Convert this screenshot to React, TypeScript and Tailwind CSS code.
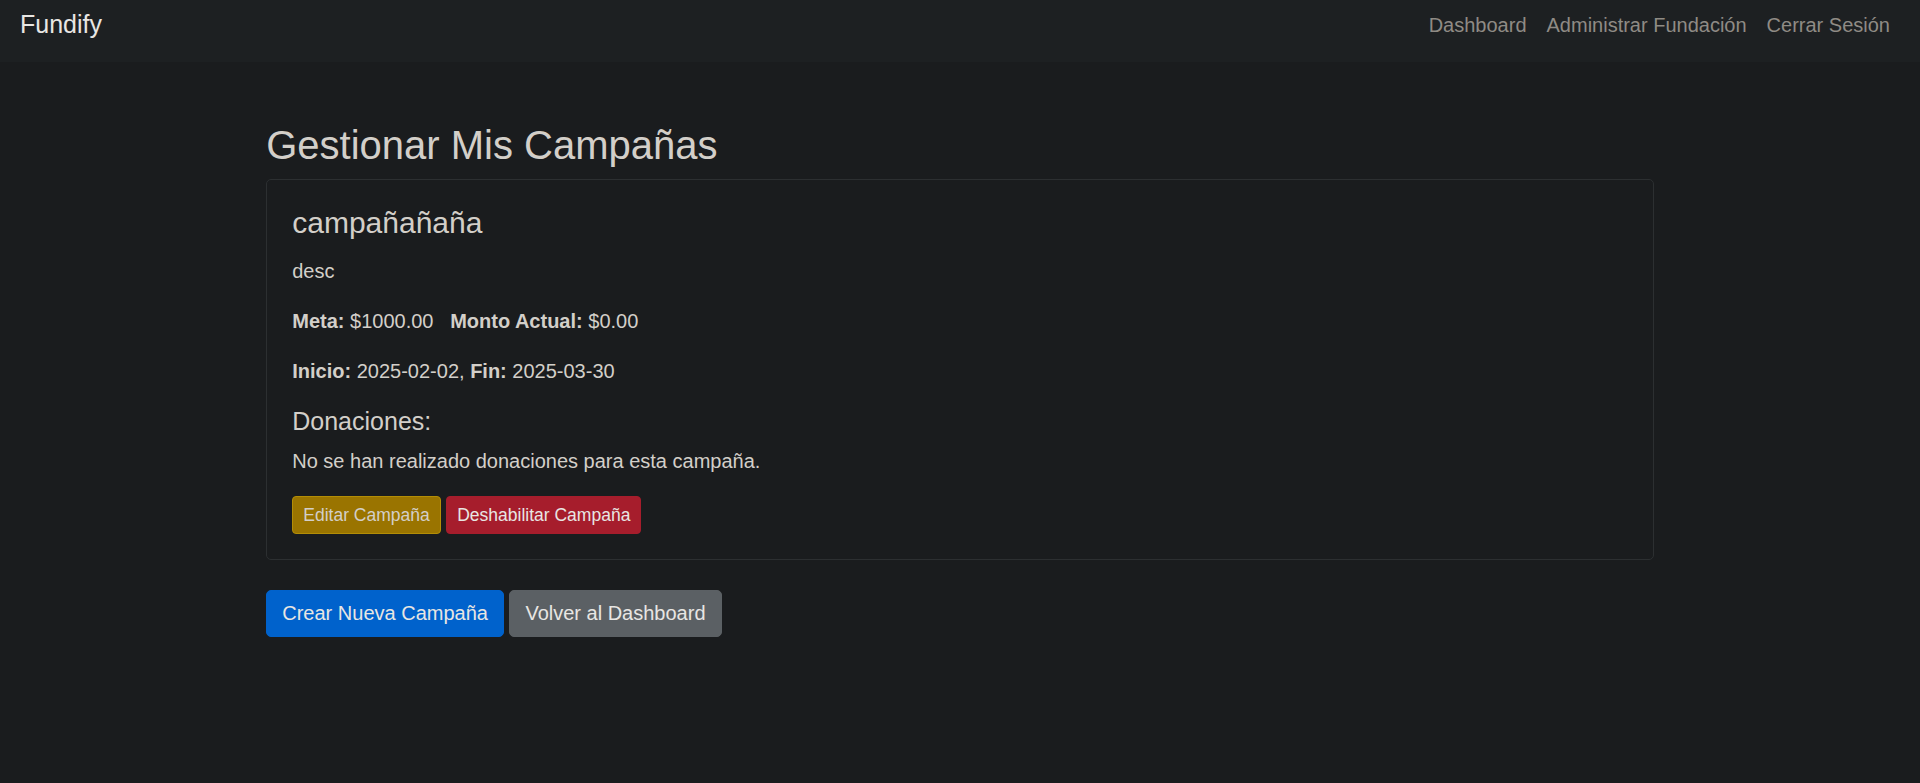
export default function App() {
  return (
    <div className="min-h-[783px] bg-[#1a1c1e] text-[#d3cfc9] font-['Liberation_Sans',Arial,sans-serif]">
      <div className="h-[62px] bg-[#1d2022]">
        <nav className="h-[49px] flex items-center justify-between px-[20px]">
          <span className="text-[25px] leading-[37.5px] text-[#e8e6e3]">Fundify</span>
          <div className="flex text-[20px] leading-[30px] text-[#8f8b85]">
            <span className="px-[10px]">Dashboard</span>
            <span className="px-[10px]">Administrar Fundación</span>
            <span className="px-[10px]">Cerrar Sesión</span>
          </div>
        </nav>
      </div>
      <main className="w-[1387.5px] mx-auto pt-[58.5px]">
        <h2 className="text-[40px] leading-[48px] mb-[10px]">Gestionar Mis Campañas</h2>
        <div className="border-[1.25px] border-[#2c2f31] rounded-[5px] p-[25px]">
          <h4 className="text-[30px] leading-[36px] mb-[15px]">campañañaña</h4>
          <p className="text-[20px] leading-[30px] mb-[20px]">desc</p>
          <p className="text-[20px] leading-[30px] mb-[20px] whitespace-pre">
            <strong className="font-bold">Meta:</strong> $1000.00{"   "}<strong className="font-bold">Monto Actual:</strong> $0.00
          </p>
          <p className="text-[20px] leading-[30px] mb-[20px] whitespace-pre">
            <strong className="font-bold">Inicio:</strong> 2025-02-02, <strong className="font-bold">Fin:</strong> 2025-03-30
          </p>
          <h5 className="text-[25px] leading-[30px] mb-[10px]">Donaciones:</h5>
          <p className="text-[20px] leading-[30px] mb-[20px]">No se han realizado donaciones para esta campaña.</p>
          <div className="flex gap-[5.5px]">
            <button className="text-[17.5px] leading-[26.25px] px-[10px] py-[5px] border-[1.25px] border-[#b38d06] bg-[#9a7400] text-[#d3cfc9] rounded-[4px]">Editar Campaña</button>
            <button className="text-[17.5px] leading-[26.25px] px-[10px] py-[5px] border-[1.25px] border-[#a61d2c] bg-[#a61d2c] text-[#e8e6e3] rounded-[4px]">Deshabilitar Campaña</button>
          </div>
        </div>
        <div className="flex gap-[5.5px] mt-[30px]">
          <button className="text-[20px] leading-[30px] px-[15px] py-[7.5px] border-[1.25px] border-[#0062cc] bg-[#0062cc] text-[#e8e6e3] rounded-[5px]">Crear Nueva Campaña</button>
          <button className="text-[20px] leading-[30px] px-[15px] py-[7.5px] border-[1.25px] border-[#5b6064] bg-[#5b6064] text-[#e8e6e3] rounded-[5px]">Volver al Dashboard</button>
        </div>
      </main>
    </div>
  );
}
